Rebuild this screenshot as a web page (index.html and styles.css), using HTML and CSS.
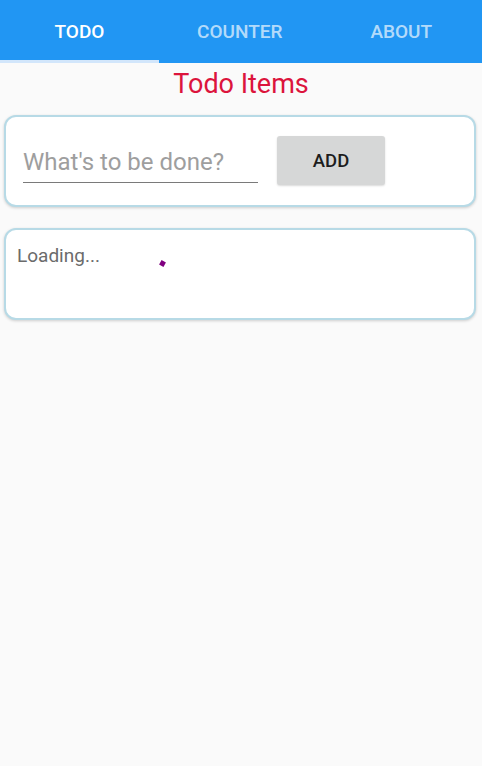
FILE: index.html
```html
<!DOCTYPE html>
<html>
<head>
<meta charset="utf-8">
<link rel="stylesheet" href="styles.css">
</head>
<body>
<div class="tabs">
  <div class="tab active">TODO</div>
  <div class="tab">COUNTER</div>
  <div class="tab">ABOUT</div>
</div>
<div class="content">
  <h1 class="title">Todo Items</h1>
  <div class="card add-card">
    <div class="input">What's to be done?</div>
    <div class="btn">ADD</div>
  </div>
  <div class="card list-card">
    <div class="loading">Loading...</div>
    <div class="spinner"></div>
  </div>
</div>
</body>
</html>
```
FILE: styles.css
```css
html, body {
  margin: 0;
  padding: 0;
  background: #fafafa;
  font-family: Roboto, "Noto Sans", sans-serif;
  height: 100%;
}
.tabs {
  display: flex;
  height: 63px;
  background: #2196f3;
}
.tab {
  flex: 1;
  display: flex;
  align-items: center;
  justify-content: center;
  color: rgba(255,255,255,0.68);
  font-size: 19px;
  font-weight: 500;
  padding-top: 2px;
  padding-bottom: 3px;
  box-sizing: border-box;
}
.tab.active {
  color: #fff;
  border-bottom: 3px solid #d2e6fb;
  padding-bottom: 0;
  flex: 0 0 159px;
}
.content {
  padding: 0 6px 0 4px;
}
.title {
  margin: 0;
  text-align: center;
  color: #dc143c;
  font-weight: 400;
  font-size: 27px;
  line-height: 42px;
  height: 52px;
  box-sizing: border-box;
  margin-left: 2px;
}
.card {
  background: #fff;
  border: 2px solid #b7dae6;
  border-radius: 12px;
  box-shadow: 0 1px 3px rgba(0,0,0,0.18);
  box-sizing: border-box;
  position: relative;
}
.add-card {
  height: 92px;
  display: flex;
  align-items: center;
  padding-left: 17px;
}
.input {
  width: 235px;
  height: 42px;
  border-bottom: 1px solid #7a7a7a;
  color: #9e9e9e;
  font-size: 24px;
  line-height: 42px;
  box-sizing: border-box;
  margin-top: 1px;
}
.btn {
  margin-left: 19px;
  width: 108px;
  height: 49px;
  background: #d6d7d7;
  border-radius: 3px;
  box-shadow: 0 1px 2px rgba(0,0,0,0.15);
  display: flex;
  align-items: center;
  justify-content: center;
  font-size: 18.5px;
  font-weight: 500;
  color: #1d1d1d;
  margin-top: -1px;
}
.list-card {
  margin-top: 21px;
  height: 92px;
  padding: 13px 11px;
}
.loading {
  color: #6b6b6b;
  font-size: 19px;
  line-height: 26px;
}
.spinner {
  position: absolute;
  left: 154px;
  top: 31px;
  width: 5px;
  height: 5px;
  background: #800080;
  transform: rotate(30deg);
}
```
